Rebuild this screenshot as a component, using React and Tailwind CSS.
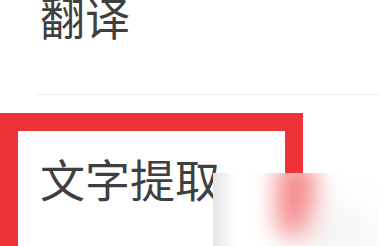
import React from 'react';

const font = { fontFamily: '"Noto Sans CJK SC", "Noto Sans", sans-serif' };

export default function App() {
  return (
    <div className="relative w-[379px] h-[246px] overflow-hidden bg-white" style={font}>
      <div className="flex flex-col">
        {/* previous menu item */}
        <div className="-mt-[6px] pl-[40px] text-[45px] leading-none text-[#3f3f3f]">翻译</div>
        <div className="mt-[55px] h-px ml-[37px] bg-[#efefef]" />

        {/* highlighted item */}
        <div className="mt-[18px] w-[303px] h-[200px] border-[18px] border-[#ee3338] pl-[22px] pt-[25px]">
          <div className="text-[45px] leading-none text-[#3f3f3f]">文字提取</div>
        </div>
      </div>

      {/* blurred watermark patch */}
      <div className="absolute left-[213px] top-[173px] right-0 bottom-0 bg-white overflow-hidden">
        <div className="absolute left-0 top-0 bottom-0 w-[22px] bg-gradient-to-r from-[#d8d8d8]/70 to-transparent" />
        <div className="absolute left-[64px] -top-[10px] bottom-[10px] w-[38px] rounded-[14px] bg-[#ee3338]/60 blur-md" />
        <div className="absolute right-0 top-[30px] w-[80px] h-[60px] rounded-full bg-[#eeeeee]/60 blur-lg" />
      </div>
    </div>
  );
}
